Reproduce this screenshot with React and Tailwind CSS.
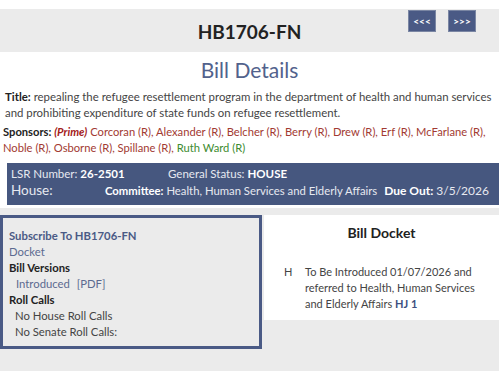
const sponsors = [
  "Corcoran (R)",
  "Alexander (R)",
  "Belcher (R)",
  "Berry (R)",
  "Drew (R)",
  "Erf (R)",
  "McFarlane (R)",
  "Noble (R)",
  "Osborne (R)",
  "Spillane (R)",
];

export default function App() {
  return (
    <div className="w-[499px] h-[371px] overflow-hidden bg-white text-[#333] font-['Lato',sans-serif]">
      {/* header band */}
      <div className="relative mt-[9px] h-[43px] bg-[#ebebeb] flex items-center justify-center">
        <h1 className="pt-[3px] text-[19px] font-bold text-[#222]">HB1706-FN</h1>
        <div className="absolute right-[23px] top-[1px] flex gap-[12px]">
          <button className="w-[28px] h-[22px] bg-[#4a5a85] border border-[#7a86a3] text-white text-[10px] font-bold leading-none">
            &lt;&lt;&lt;
          </button>
          <button className="w-[28px] h-[22px] bg-[#4a5a85] border border-[#7a86a3] text-white text-[10px] font-bold leading-none">
            &gt;&gt;&gt;
          </button>
        </div>
      </div>

      <h2 className="mt-[5px] text-center text-[21px] leading-[26px] text-[#52628c]">Bill Details</h2>

      <p className="mt-[6px] pl-[5px] text-[11.4px] leading-[16px] text-[#444]">
        <b className="text-[#222]">Title:</b> repealing the refugee resettlement program in the department of health and human services and prohibiting expenditure of state funds on refugee resettlement.
      </p>

      <p className="mt-[3px] pl-[3px] text-[11.2px] leading-[16px] text-[#a23a32]">
        <b className="text-[#222]">Sponsors: </b>
        <b className="italic text-[#a3201a]">(Prime)</b> {sponsors.join(", ")},{" "}
        <span className="text-[#3d8b2f]">Ruth Ward (R)</span>
      </p>

      {/* status bar */}
      <div className="mt-[7px] ml-[7px] h-[42px] bg-[#46577f] text-[#e6e9f0] px-[4px] pt-[4px]">
        <div className="flex text-[11.5px] leading-[14px]">
          <span className="w-[157px]">
            LSR Number: <b className="text-white">26-2501</b>
          </span>
          <span>
            General Status: <b className="text-white">HOUSE</b>
          </span>
        </div>
        <div className="flex items-baseline">
          <span className="w-[94px] text-[13.5px] leading-[18px]">House:</span>
          <span className="text-[11.3px]">
            <b className="text-white">Committee:</b> Health, Human Services and Elderly Affairs
          </span>
          <span className="ml-[7px] text-[12px]">
            <b className="text-white">Due Out:</b> 3/5/2026
          </span>
        </div>
      </div>

      {/* lower area */}
      <div className="mt-[3px] h-[200px] bg-[#ebebeb] pt-[7px] flex items-start">
        <div className="w-[262px] h-[134px] border-[3px] border-[#4a5a85] px-[6px] pt-[10px] text-[11.3px] leading-[16px]">
          <div className="font-bold text-[#4a5a85]">Subscribe To HB1706-FN</div>
          <div className="text-[#5c6a90]">Docket</div>
          <div className="font-bold text-[#222]">Bill Versions</div>
          <div className="pl-[7px] text-[#5c6a90]">
            Introduced <span className="ml-[4px]">[PDF]</span>
          </div>
          <div className="font-bold text-[#222]">Roll Calls</div>
          <div className="pl-[6px] text-[#444]">No House Roll Calls</div>
          <div className="pl-[6px] text-[#444]">No Senate Roll Calls:</div>
        </div>
        <div className="ml-[2px] flex-1 h-[105px] bg-white pt-[9px]">
          <h3 className="text-center text-[14px] font-bold text-[#222] leading-[18px]">Bill Docket</h3>
          <div className="mt-[22px] flex text-[11px] leading-[16px] text-[#444]">
            <span className="w-[41px] pl-[20px]">H</span>
            <span className="w-[180px]">
              To Be Introduced 01/07/2026 and referred to Health, Human Services and Elderly Affairs{" "}
              <b className="text-[#3d4f80]">HJ 1</b>
            </span>
          </div>
        </div>
      </div>
    </div>
  );
}
